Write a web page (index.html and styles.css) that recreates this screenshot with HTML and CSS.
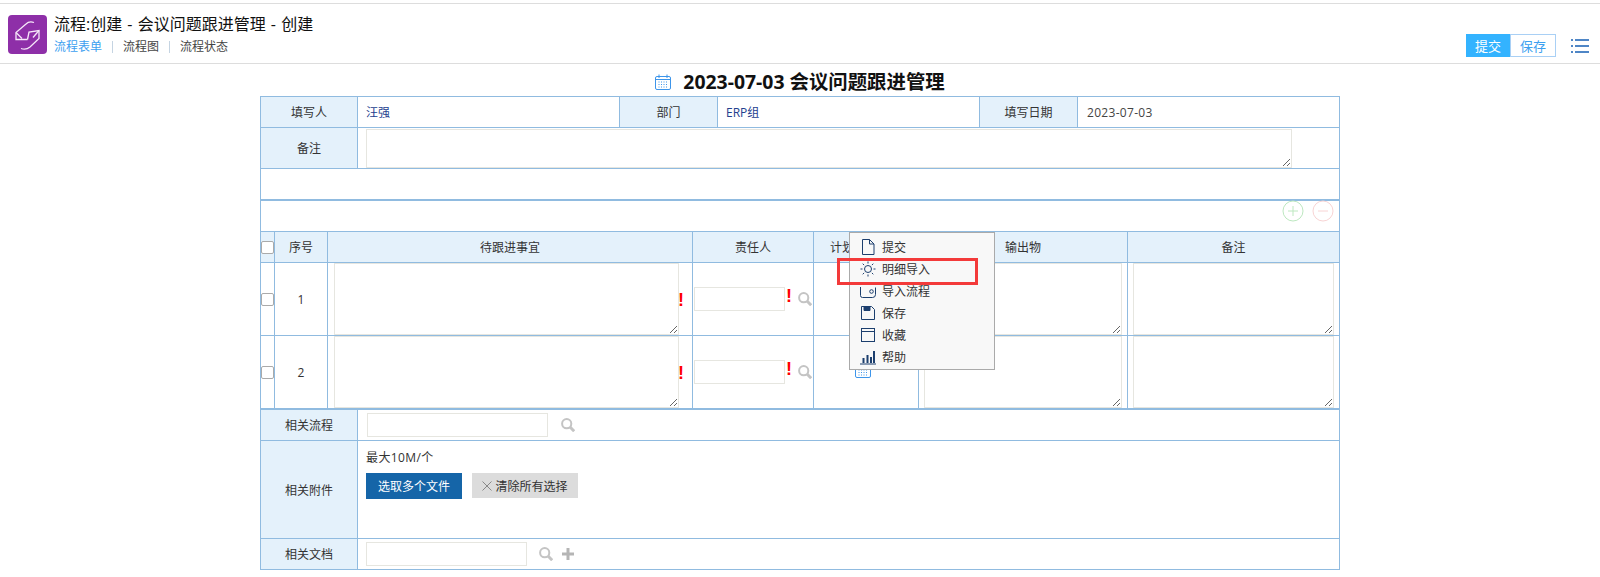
FILE: index.html
```html
<!DOCTYPE html>
<html lang="zh-CN">
<head>
  <meta charset="UTF-8" />
  <meta name="viewport" content="width=device-width, initial-scale=1.0" />
  <title>流程:创建 - 会议问题跟进管理 - 创建</title>
  <link rel="stylesheet" href="styles.css">
</head>
<body>
  <svg class="defs" width="0" height="0">
    <symbol id="ico-search" viewBox="0 0 14 14">
      <circle cx="5.7" cy="5.7" r="4.6" fill="none" stroke="currentColor" stroke-width="2"/>
      <path d="M9 9l4.200 4.200" fill="none" stroke="currentColor" stroke-width="3"/>
    </symbol>
    <symbol id="ico-cal" viewBox="0 0 16 16">
      <rect x="0.5" y="2.5" width="15" height="13" rx="1.5" fill="#fff" stroke="currentColor"/>
      <path d="M1 5.5h14M4 0.5v3.5M12 0.5v3.5" fill="none" stroke="currentColor"/>
      <path d="M3.500 8h9M3.500 10.500h9M3.500 13h9" fill="none" stroke="currentColor" stroke-dasharray="1 1.500"/>
    </symbol>
  </svg>

  <header class="topbar">
    <div class="logo">
      <svg width="39" height="39" viewBox="0 0 39 39" fill="none" stroke="#f6e8f9" stroke-width="1.300">
        <path d="M26 7.500c-3-1-6-.5-8 1.500L8 17.500v7h11.500"/>
        <path d="M8 17.500l6 6"/>
        <path d="M19.500 24.500l1.500-7.500l10-1.500v8l-9 8.500c-2.500 2-6 2.500-9 1.500"/>
        <path d="M31 15.500l-6 7"/>
      </svg>
    </div>
    <div class="topbar-text">
      <div class="flow-title">流程:创建 - 会议问题跟进管理 - 创建</div>
      <nav class="tabs">
        <a class="active">流程表单</a><i></i><a>流程图</a><i></i><a>流程状态</a>
      </nav>
    </div>
    <div class="actions">
      <button class="btn-submit">提交</button><button class="btn-save">保存</button>
      <svg class="list-ico" width="18" height="14" viewBox="0 0 18 14" fill="#4f86c6">
        <rect x="0" y="0" width="2" height="2"/><rect x="4" y="0" width="14" height="2"/>
        <rect x="0" y="6" width="2" height="2"/><rect x="4" y="6" width="14" height="2"/>
        <rect x="0" y="12" width="2" height="2"/><rect x="4" y="12" width="14" height="2"/>
      </svg>
    </div>
  </header>

  <h1 class="form-title">
    <svg class="title-cal" width="16" height="16"><use href="#ico-cal"/></svg>
    2023-07-03 会议问题跟进管理
  </h1>

  <div class="form">
    <table class="sheet">
      <colgroup>
        <col style="width:97px"><col style="width:262px"><col style="width:98px">
        <col style="width:262px"><col style="width:98px"><col>
      </colgroup>
      <tr class="row-31">
        <th>填写人</th><td class="val">汪强</td>
        <th>部门</th><td class="val">ERP组</td>
        <th>填写日期</th><td class="val date">2023-07-03</td>
      </tr>
      <tr class="row-41">
        <th>备注</th>
        <td colspan="5" class="note"><textarea class="note-box"></textarea></td>
      </tr>
      <tr class="row-31"><td colspan="6"></td></tr>
    </table>

    <div class="toolbar">
      <svg width="22" height="22" viewBox="0 0 22 22" fill="none" stroke="#bde8c0">
        <circle cx="11" cy="11" r="10"/><path d="M6 11h10M11 6v10"/>
      </svg>
      <svg width="22" height="22" viewBox="0 0 22 22" fill="none" stroke="#f8d4d4">
        <circle cx="11" cy="11" r="10"/><path d="M6 11h10"/>
      </svg>
    </div>

    <table class="sheet detail">
      <colgroup>
        <col style="width:14px"><col style="width:53px"><col style="width:365px">
        <col style="width:121px"><col style="width:105px"><col style="width:209px"><col>
      </colgroup>
      <tr class="row-31">
        <th class="chk"><span class="box"></span></th>
        <th>序号</th><th>待跟进事宜</th><th>责任人</th><th>计划完成时间</th><th>输出物</th><th>备注</th>
      </tr>
      <tr class="row-73">
        <td class="chk"><span class="box"></span></td>
        <td class="num">1</td>
        <td class="todo"><textarea></textarea><b class="must">!</b></td>
        <td class="owner"><input type="text"><b class="must">!</b><svg class="search" width="14" height="14"><use href="#ico-search"/></svg></td>
        <td class="plan"><svg class="cal" width="16" height="16"><use href="#ico-cal"/></svg></td>
        <td class="out"><textarea></textarea></td>
        <td class="rem"><textarea></textarea></td>
      </tr>
      <tr class="row-73">
        <td class="chk"><span class="box"></span></td>
        <td class="num">2</td>
        <td class="todo"><textarea></textarea><b class="must">!</b></td>
        <td class="owner"><input type="text"><b class="must">!</b><svg class="search" width="14" height="14"><use href="#ico-search"/></svg></td>
        <td class="plan"><svg class="cal" width="16" height="16"><use href="#ico-cal"/></svg></td>
        <td class="out"><textarea></textarea></td>
        <td class="rem"><textarea></textarea></td>
      </tr>
    </table>

    <table class="sheet">
      <colgroup><col style="width:97px"><col></colgroup>
      <tr class="row-31">
        <th>相关流程</th>
        <td class="link-cell"><input type="text" class="wide-181"><svg class="search" width="14" height="14"><use href="#ico-search"/></svg></td>
      </tr>
      <tr class="row-98">
        <th>相关附件</th>
        <td class="attach">
          <div class="limit">最大10M/个</div>
          <div class="attach-btns">
            <button class="btn-pick">选取多个文件</button>
            <button class="btn-clear">
              <svg width="10" height="10" viewBox="0 0 10 10" fill="none" stroke="#888"><path d="M0.500 0.500l9 9M9.500 0.500l-9 9"/></svg>
              清除所有选择
            </button>
          </div>
        </td>
      </tr>
      <tr class="row-31">
        <th>相关文档</th>
        <td class="doc-cell">
          <input type="text" class="wide-161">
          <svg class="search" width="14" height="14"><use href="#ico-search"/></svg>
          <svg class="plus" width="12" height="12" viewBox="0 0 12 12" fill="#b5b5b5"><path d="M4.500 0h3v4.500H12v3H7.500V12h-3V7.500H0v-3h4.500z"/></svg>
        </td>
      </tr>
    </table>

    <div class="menu">
      <div class="menu-item">
        <svg width="16" height="16" viewBox="0 0 16 16" fill="none" stroke="#1c3f6e"><path d="M2.500 0.500h7l4.500 4.500v10.500h-11.500zM9.500 0.500v4.500h4.500"/></svg>
        提交
      </div>
      <div class="menu-item">
        <svg width="16" height="16" viewBox="0 0 16 16" fill="none" stroke="#1c3f6e"><circle cx="8" cy="8" r="3.500"/><path d="M8 0.500v2M8 13.500v2M0.500 8h2M13.500 8h2M2.700 2.700l1.400 1.400M11.900 11.900l1.400 1.400M2.700 13.300l1.400-1.400M11.900 4.100l1.400-1.400"/></svg>
        明细导入
      </div>
      <div class="menu-item">
        <svg width="16" height="16" viewBox="0 0 16 16" fill="none" stroke="#1c3f6e"><path d="M0.500 4v8.500a2 2 0 0 0 2 2h10a3 3 0 0 0 3-3v-7"/><circle cx="11.500" cy="8.500" r="1.800"/></svg>
        导入流程
      </div>
      <div class="menu-item">
        <svg width="16" height="16" viewBox="0 0 16 16" fill="none" stroke="#1c3f6e"><path d="M1.500 1.500h10l3 3v10h-13z"/><path d="M4 1.500h6v4h-6z" fill="#1c3f6e"/></svg>
        保存
      </div>
      <div class="menu-item">
        <svg width="16" height="16" viewBox="0 0 16 16" fill="none" stroke="#1c3f6e"><rect x="1.500" y="1.500" width="13" height="13"/><path d="M1.500 4.500h13"/></svg>
        收藏
      </div>
      <div class="menu-item">
        <svg width="16" height="16" viewBox="0 0 16 16" fill="#1c3f6e"><path d="M0 14.500h16v1H0zM2.500 9h2v5h-2zM6.500 6h2v8h-2zM10 8h2v6h-2zM13 2h2v12h-2z"/></svg>
        帮助
      </div>
      <div class="menu-mark"></div>
    </div>
  </div>
</body>
</html>
```

FILE: styles.css
```css
html, body {
  margin: 0;
  padding: 0;
  background: #fff;
  color: #333;
  font-family: "Open Sans", "Noto Sans CJK SC", sans-serif;
  font-size: 12px;
  overflow: hidden;
}
.defs {
  position: absolute;
}
.topbar {
  display: flex;
  align-items: flex-start;
  height: 59px;
  margin-top: 3px;
  border-top: 1px solid #ddd;
  border-bottom: 1px solid #ddd;
}
.logo {
  width: 39px;
  height: 39px;
  margin: 11px 7px 0 8px;
  background: #8e2fa8;
  border-radius: 4px;
}
.logo svg {
  display: block;
}
.topbar-text {
  flex: 1;
  padding-top: 9px;
}
.flow-title {
  font-size: 16px;
  word-spacing: 1px;
  line-height: 22px;
  color: #111;
}
.tabs {
  display: flex;
  align-items: center;
  margin-top: 3px;
  line-height: 18px;
  color: #444;
}
.tabs a.active {
  color: #3da0f0;
}
.tabs i {
  width: 1px;
  height: 12px;
  background: #c5d4e2;
  margin: 0 10px;
}
.actions {
  display: flex;
  align-items: center;
  margin-top: 30px;
  padding-right: 11px;
}
.actions button {
  height: 23px;
  padding: 0;
  font: inherit;
  font-size: 13px;
  border: 1px solid #33b3ff;
}
.btn-submit {
  width: 44px;
  background: #33b3ff;
  color: #fff;
}
.btn-save {
  width: 46px;
  background: #fff;
  color: #3da0f0;
  border-color: #a9d0f5 !important;
}
.list-ico {
  margin-left: 15px;
}
.form-title {
  margin: 0;
  height: 32px;
  line-height: 36px;
  font-size: 19.400px;
  font-weight: 700;
  color: #111;
  text-align: center;
}
.title-cal {
  color: #3d95ea;
  margin-right: 7px;
  vertical-align: -1px;
}
.form {
  position: relative;
  width: 1080px;
  margin: 0 auto;
}
.sheet {
  width: 100%;
  table-layout: fixed;
  border-collapse: collapse;
  border: 1px solid #90bbe0;
}
.sheet th, .sheet td {
  border: 1px solid #90bbe0;
  padding: 0;
  font-weight: 400;
  text-align: center;
  vertical-align: middle;
}
.sheet th {
  background: #e4f1fb;
  color: #333;
}
.row-31 { height: 31px; }
.row-41 { height: 41px; }
.row-73 { height: 73px; }
.row-98 { height: 98px; }
.sheet td.val {
  text-align: left;
  padding-left: 8px;
  color: #23408e;
}
.sheet td.date {
  padding-left: 9px;
  letter-spacing: 0.300px;
  color: #444;
}
textarea, input {
  box-sizing: border-box;
  border: 1px solid #e6e6e0;
  background: #fff;
  margin: 0;
  outline: 0;
}
textarea {
  display: block;
}
.sheet td.note {
  text-align: left;
  padding-left: 8px;
}
.note-box {
  width: 926px;
  height: 39px;
}
.toolbar {
  display: flex;
  justify-content: flex-end;
  gap: 8px;
  height: 31px;
  align-items: flex-start;
  box-sizing: border-box;
  padding-right: 5px;
  border-top: 1px solid #90bbe0;
  border-left: 1px solid #90bbe0;
  border-right: 1px solid #90bbe0;
}
.toolbar svg {
  margin-top: -1px;
}
.detail .box, .chk .box {
  display: block;
  box-sizing: border-box;
  width: 13px;
  height: 13px;
  border: 1px solid #aaa;
  border-radius: 2px;
  background: #fff;
}
.sheet .num {
  color: #333;
}
.sheet .todo, .sheet .owner, .sheet .out, .sheet .rem, .sheet .link-cell, .sheet .doc-cell, .sheet .attach {
  text-align: left;
}
.todo {
  position: relative;
}
.todo textarea {
  width: 345px;
  height: 72px;
  margin-left: 6px;
}
.todo .must {
  position: absolute;
  left: 350px;
  top: 28px;
}
.must {
  color: #f00;
  font: 700 18px/18px "Liberation Sans", sans-serif;
}
.owner {
  position: relative;
}
.owner input {
  width: 91px;
  height: 24px;
  margin-left: 1px;
  vertical-align: middle;
}
.owner .must {
  position: absolute;
  left: 93px;
  top: 24px;
}
.owner .search {
  position: absolute;
  left: 105px;
  top: 29px;
}
.search {
  color: #c4c4c4;
}
.plan {
  position: relative;
}
.plan .cal {
  position: absolute;
  left: 41px;
  top: 26px;
  color: #3d95ea;
}
.out textarea {
  width: 198px;
  height: 72px;
  margin-left: 5px;
}
.rem textarea {
  width: 201px;
  height: 72px;
  margin-left: 5px;
}
.link-cell, .doc-cell {
  white-space: nowrap;
}
.link-cell input, .doc-cell input {
  height: 24px;
  vertical-align: middle;
}
.link-cell .search, .doc-cell .search, .doc-cell .plus {
  vertical-align: middle;
}
.wide-181 {
  width: 181px;
  margin-left: 9px;
}
.link-cell .search {
  margin-left: 13px;
}
.wide-161 {
  width: 161px;
  margin-left: 8px;
}
.doc-cell .search {
  margin-left: 9px;
}
.doc-cell .plus {
  margin-left: 6px;
}
.sheet td.attach {
  vertical-align: top;
  padding-left: 8px;
}
.limit {
  margin-top: 8px;
  line-height: 18px;
  letter-spacing: 0.400px;
  color: #333;
}
.attach-btns {
  display: flex;
  align-items: flex-start;
  gap: 10px;
  margin-top: 6px;
}
.attach-btns button {
  border: 0;
  padding: 0;
  font: inherit;
}
.btn-pick {
  width: 96px;
  height: 26px;
  background: #1565a8;
  color: #fff;
}
.btn-clear {
  width: 106px;
  height: 25px;
  background: #dcdcdc;
  color: #333;
}
.menu {
  position: absolute;
  left: 589px;
  top: 136px;
  box-sizing: border-box;
  width: 146px;
  height: 138px;
  padding-top: 3px;
  background: #f8f8f8;
  border: 1px solid #aaa;
}
.menu-item {
  display: flex;
  align-items: center;
  gap: 6px;
  height: 22px;
  padding-left: 10px;
  color: #333;
}
.menu-mark {
  position: absolute;
  left: -13px;
  top: 25px;
  box-sizing: border-box;
  width: 141px;
  height: 27px;
  border: 3px solid #f33a3a;
}
```
